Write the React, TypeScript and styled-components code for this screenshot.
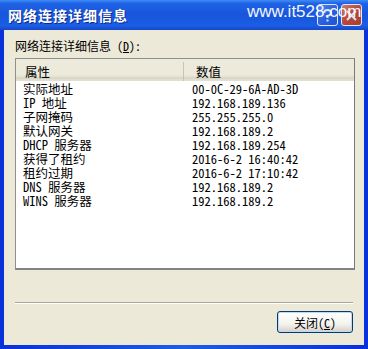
import styled, { createGlobalStyle } from "styled-components";

const GlobalStyle = createGlobalStyle`
  html, body {
    margin: 0;
    padding: 0;
    background: #ffffff;
  }
  * {
    box-sizing: border-box;
  }
`;

const Window = styled.div`
  width: 368px;
  height: 349px;
  display: flex;
  flex-direction: column;
  background: linear-gradient(90deg, #0831d9 0%, #1d5ce6 50%, #0831d9 100%);
  font-family: "Noto Sans Mono CJK SC", "Noto Sans CJK SC", sans-serif;
  overflow: hidden;
`;

const TitleBar = styled.div`
  position: relative;
  height: 30px;
  display: flex;
  align-items: center;
  padding: 0 6px 0 8px;
  background: linear-gradient(180deg, #3d8cf7 0%, #1f62e4 12%, #1755dc 50%, #1a5ee6 85%, #1748c6 100%);
  color: #ffffff;
`;

const TitleText = styled.div`
  font-family: "Noto Sans CJK SC", sans-serif;
  font-weight: 700;
  font-size: 14px;
  letter-spacing: 1px;
  text-shadow: 1px 1px 0 #0a2a8a;
  flex: 1;
`;

// watermark sits over the caption buttons
const Watermark = styled.div`
  position: absolute;
  left: 247px;
  top: 2px;
  z-index: 2;
  font-family: "Liberation Sans", "DejaVu Sans", sans-serif;
  font-size: 17px;
  color: #ffffff;
  opacity: 0.95;
  white-space: nowrap;
`;

const CapButton = styled.div<{ $red?: boolean }>`
  width: 21px;
  height: 22px;
  margin-left: 3px;
  border: 1px solid #ffffff;
  border-radius: 3px;
  display: flex;
  align-items: center;
  justify-content: center;
  opacity: 0.85;
  background: ${(p) =>
    p.$red
      ? "linear-gradient(135deg, #e9845e 0%, #d5431c 50%, #c13a10 100%)"
      : "linear-gradient(135deg, #5b8df5 0%, #2d63e0 50%, #2154d0 100%)"};
`;

const Body = styled.div`
  flex: 1;
  margin: 0 4px 4px 4px;
  background: #ece9d8;
  display: flex;
  flex-direction: column;
  padding: 9px 8px 12px 11px;
`;

const Label = styled.div`
  font-size: 12px;
  line-height: 14px;
  color: #000000;
  margin-bottom: 5px;
`;

const ListBox = styled.div`
  height: 212px;
  background: #ffffff;
  border: 1px solid #8e8f8f;
  border-right-color: #7a7a7a;
  border-bottom: 2px solid #838383;
  display: flex;
  flex-direction: column;
  margin-right: 1px;
`;

const HeaderRow = styled.div`
  display: grid;
  grid-template-columns: 168px 1fr;
  height: 22px;
  background: linear-gradient(180deg, #ebeadb 0%, #ebeadb 80%, #d6d2c2 100%);
  border-bottom: 2px solid #e2ded0;
`;

const HeaderCell = styled.div<{ $last?: boolean }>`
  font-size: 12.5px;
  display: flex;
  align-items: center;
  padding-left: ${(p) => (p.$last ? "12px" : "9px")};
  border-right: ${(p) => (p.$last ? "none" : "1px solid #c7c5b2")};
  margin: 3px 0;
  color: #000000;
`;

const Rows = styled.div`
  padding-top: 1px;
`;

const Row = styled.div`
  display: grid;
  grid-template-columns: 169px 1fr;
  height: 14px;
  font-size: 12.5px;
  line-height: 14px;
  color: #000000;
`;

const Cell = styled.div`
  padding-left: 7px;
  white-space: nowrap;
`;

const Spacer = styled.div`
  flex: 1;
`;

const Separator = styled.div`
  height: 2px;
  border-top: 1px solid #aca899;
  border-bottom: 1px solid #ffffff;
  margin-right: 3px;
  margin-bottom: 7px;
`;

const Footer = styled.div`
  display: flex;
  justify-content: flex-end;
  padding-right: 3px;
`;

const CloseButton = styled.div`
  width: 76px;
  height: 22px;
  border: 1px solid #003c74;
  border-radius: 3px;
  background: linear-gradient(180deg, #ffffff 0%, #f3f3ef 60%, #d6d0c5 100%);
  box-shadow: inset 0 0 0 1px #c6d6f2;
  display: flex;
  align-items: center;
  justify-content: center;
  font-size: 12px;
  color: #000000;
`;

const rows: [string, string][] = [
  ["实际地址", "00-0C-29-6A-AD-3D"],
  ["IP 地址", "192.168.189.136"],
  ["子网掩码", "255.255.255.0"],
  ["默认网关", "192.168.189.2"],
  ["DHCP 服务器", "192.168.189.254"],
  ["获得了租约", "2016-6-2 16:40:42"],
  ["租约过期", "2016-6-2 17:10:42"],
  ["DNS 服务器", "192.168.189.2"],
  ["WINS 服务器", "192.168.189.2"],
];

const App = () => {
  return (
    <>
      <GlobalStyle />
      <Window>
        <TitleBar>
          <TitleText>网络连接详细信息</TitleText>
          <Watermark>www.it528.com</Watermark>
          <CapButton>
            <svg width="11" height="13" viewBox="0 0 11 13">
              <path d="M2 4 Q2 1 5.5 1 Q9 1 9 4 Q9 6 5.5 7 L5.5 9" stroke="#fff" strokeWidth="2" fill="none" />
              <rect x="4.5" y="10.5" width="2" height="2" fill="#fff" />
            </svg>
          </CapButton>
          <CapButton $red>
            <svg width="11" height="11" viewBox="0 0 11 11">
              <path d="M1 1 L10 10 M10 1 L1 10" stroke="#fff" strokeWidth="2" />
            </svg>
          </CapButton>
        </TitleBar>
        <Body>
          <Label>网络连接详细信息 (<u>D</u>):</Label>
          <ListBox>
            <HeaderRow>
              <HeaderCell>属性</HeaderCell>
              <HeaderCell $last>数值</HeaderCell>
            </HeaderRow>
            <Rows>
              {rows.map(([k, v]) => (
                <Row key={k}>
                  <Cell>{k}</Cell>
                  <Cell>{v}</Cell>
                </Row>
              ))}
            </Rows>
          </ListBox>
          <Spacer />
          <Separator />
          <Footer>
            <CloseButton>关闭(<u>C</u>)</CloseButton>
          </Footer>
        </Body>
      </Window>
    </>
  );
};

export default App;
